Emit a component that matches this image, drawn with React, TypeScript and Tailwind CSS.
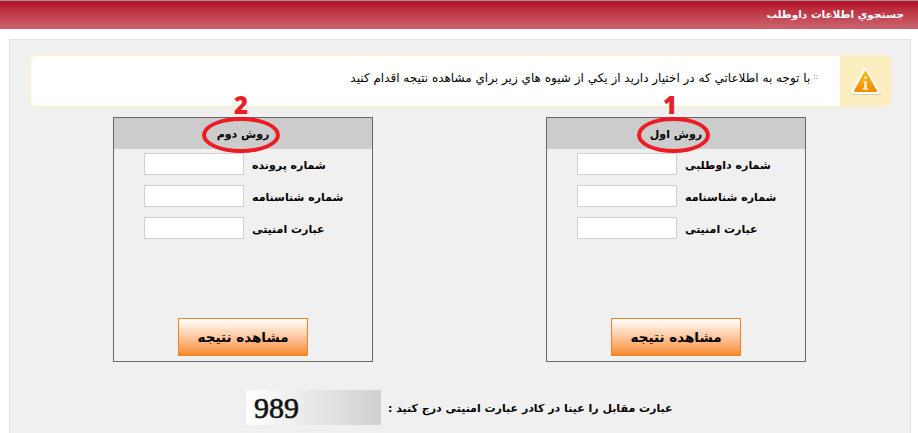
const FONT = "font-['DejaVu_Sans',sans-serif]";

function InfoIcon() {
  return (
    <svg width="31" height="29" viewBox="0 0 31 29">
      <defs>
        <linearGradient id="warn" x1="0" y1="0" x2="0" y2="1">
          <stop offset="0" stopColor="#ffb914" />
          <stop offset="1" stopColor="#f28c00" />
        </linearGradient>
      </defs>
      <path d="M15.5 4 L28.5 26 H2.5 Z" fill="#000000" fillOpacity="0.18" stroke="#000000" strokeOpacity="0.12" strokeWidth="4" strokeLinejoin="round" />
      <path d="M15.5 3 L28 25 H3 Z" fill="url(#warn)" stroke="#ffffff" strokeWidth="4" strokeLinejoin="round" />
      <path d="M15.5 5 L26 24 H5 Z" fill="url(#warn)" stroke="url(#warn)" strokeWidth="2" strokeLinejoin="round" />
      <circle cx="15.5" cy="10.5" r="1.6" fill="#ffe9b8" />
      <path d="M13 14 H17 V21.5 H18.5 V23 H12.5 V21.5 H14 V15.5 H13 Z" fill="#ffe9b8" />
    </svg>
  );
}

function Field({ label }: { label: string }) {
  return (
    <div className="flex items-center gap-2 h-[22px]">
      <div className="w-[100px] h-[22px] bg-white border border-[#d0d0d0]" />
      <span dir="rtl" className="pt-[4px] text-[11px] font-bold text-black whitespace-nowrap">
        {label}
      </span>
    </div>
  );
}

function MethodCard({ title, num, fields, circle }: { title: string; num: string; fields: string[]; circle: string }) {
  return (
    <div className="relative w-[260px] h-[245px] border border-[#666] flex flex-col">
      <div dir="rtl" className="h-[31px] pt-[3px] bg-[#cccccc] flex items-center justify-center text-[11px] font-bold text-black">
        {title}
      </div>
      <div className="flex flex-col gap-[10px] pt-[4px] pl-[30px]">
        {fields.map((f) => (
          <Field key={f} label={f} />
        ))}
      </div>
      <div className="mt-auto mb-[5px] flex justify-center">
        <button
          dir="rtl"
          className={`w-[130px] h-[38px] border border-[#f58220] bg-gradient-to-b from-white to-[#f78a25] text-[13.5px] font-bold text-black ${FONT}`}
        >
          مشاهده نتیجه
        </button>
      </div>
      {/* red marks drawn over the screenshot */}
      <span className={`absolute top-[-25px] text-[24px] leading-[24px] font-extrabold text-[#ed1c24] font-['Open_Sans',sans-serif] ${num === "1" ? "left-[116px]" : "left-[120px]"}`}>
        {num}
      </span>
      <div className={`absolute top-[-1px] h-[36px] rounded-[50%] border-[4px] border-[#ed1c24] ${circle}`} />
    </div>
  );
}

export default function App() {
  return (
    <div className={`w-[918px] h-[433px] overflow-hidden bg-white ${FONT}`}>
      {/* title bar */}
      <div className="h-[29px] border-t border-[#999] bg-gradient-to-b from-[#b8132e] from-[10%] to-[#cb6472] flex items-center justify-end pr-[14px]">
        <h1 dir="rtl" className="text-[10.5px] font-bold text-white">
          جستجوي اطلاعات داوطلب
        </h1>
      </div>

      <div className="mt-[10px] mr-[7px] ml-[9px] h-[400px] bg-[#f0f0f0] border border-[#e0e0e0]">
        {/* notice */}
        <div className="mt-[15px] ml-[20px] mr-[19px] h-[52px] flex rounded-[6px] overflow-hidden border border-[#fdeebf]">
          <div dir="rtl" className="flex-1 bg-white flex items-center pr-[22px] pb-[7px] text-[12px] text-black whitespace-nowrap">
            <span className="text-[7px] ml-[3px]">::</span>
            با توجه به اطلاعاتي که در اختيار داريد از يکي از شيوه هاي زير براي مشاهده نتيجه اقدام کنيد
          </div>
          <div className="w-[50px] bg-[#fdeebf] flex items-center justify-center">
            <InfoIcon />
          </div>
        </div>

        {/* two lookup methods */}
        <div className="mt-[10px] pl-[103px] pr-[104px] flex justify-between">
          <MethodCard title="روش دوم" num="2" circle="left-[88px] w-[78px]" fields={["شماره پرونده", "شماره شناسنامه", "عبارت امنیتی"]} />
          <MethodCard title="روش اول" num="1" circle="left-[90px] w-[73px]" fields={["شماره داوطلبی", "شماره شناسنامه", "عبارت امنیتی"]} />
        </div>

        {/* captcha */}
        <div className="mt-[28px] ml-[236px] flex items-center gap-[7px]">
          <div className="w-[135px] h-[35px] bg-gradient-to-r from-white to-[#d0d0d0] flex items-center pl-[8px] font-['Liberation_Serif',serif] text-[30px] text-[#111] [-webkit-text-stroke:0.6px_#111]">
            989
          </div>
          <span dir="rtl" className="pt-[4px] text-[11px] font-bold text-black whitespace-nowrap">
            عبارت مقابل را عینا در کادر عبارت امنیتی درج کنید :
          </span>
        </div>
      </div>
    </div>
  );
}
